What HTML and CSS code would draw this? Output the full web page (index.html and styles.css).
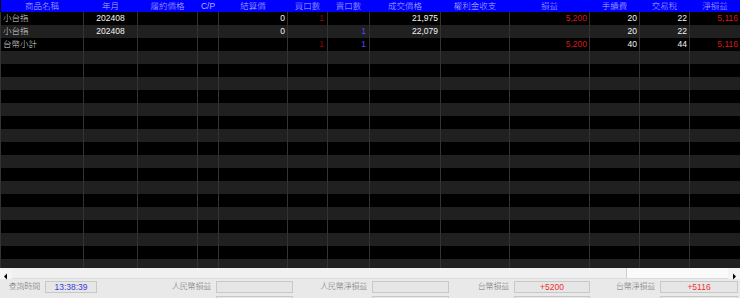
FILE: index.html
```html
<!DOCTYPE html>
<html lang="zh-Hant">
<head>
<meta charset="utf-8">
<link rel="stylesheet" href="styles.css">
</head>
<body>
<div class="grid-wrap">
<table class="grid">
<colgroup>
<col style="width:83px"><col style="width:54px"><col style="width:60px"><col style="width:21px"><col style="width:69px"><col style="width:40px"><col style="width:42px"><col style="width:71px"><col style="width:69px"><col style="width:80px"><col style="width:50px"><col style="width:50px"><col style="width:51px">
</colgroup>
<thead>
<tr><th>商品名稱</th><th>年月</th><th>履約價格</th><th>C/P</th><th>結算價</th><th>買口數</th><th>賣口數</th><th>成交價格</th><th>權利金收支</th><th>損益</th><th>手續費</th><th>交易稅</th><th>淨損益</th></tr>
</thead>
<tbody>
<tr><td class="l">小台指</td><td class="c">202408</td><td></td><td></td><td class="r">0</td><td class="r buy">1</td><td class="r"></td><td class="r">21,975</td><td></td><td class="r red">5,200</td><td class="r">20</td><td class="r">22</td><td class="r red">5,116</td></tr>
<tr><td class="l">小台指</td><td class="c">202408</td><td></td><td></td><td class="r">0</td><td class="r"></td><td class="r sell">1</td><td class="r">22,079</td><td></td><td class="r"></td><td class="r">20</td><td class="r">22</td><td></td></tr>
<tr><td class="l">台幣小計</td><td></td><td></td><td></td><td></td><td class="r buy">1</td><td class="r sell">1</td><td></td><td></td><td class="r red">5,200</td><td class="r">40</td><td class="r">44</td><td class="r red">5,116</td></tr>
<tr><td></td><td></td><td></td><td></td><td></td><td></td><td></td><td></td><td></td><td></td><td></td><td></td><td></td></tr>
<tr><td></td><td></td><td></td><td></td><td></td><td></td><td></td><td></td><td></td><td></td><td></td><td></td><td></td></tr>
<tr><td></td><td></td><td></td><td></td><td></td><td></td><td></td><td></td><td></td><td></td><td></td><td></td><td></td></tr>
<tr><td></td><td></td><td></td><td></td><td></td><td></td><td></td><td></td><td></td><td></td><td></td><td></td><td></td></tr>
<tr><td></td><td></td><td></td><td></td><td></td><td></td><td></td><td></td><td></td><td></td><td></td><td></td><td></td></tr>
<tr><td></td><td></td><td></td><td></td><td></td><td></td><td></td><td></td><td></td><td></td><td></td><td></td><td></td></tr>
<tr><td></td><td></td><td></td><td></td><td></td><td></td><td></td><td></td><td></td><td></td><td></td><td></td><td></td></tr>
<tr><td></td><td></td><td></td><td></td><td></td><td></td><td></td><td></td><td></td><td></td><td></td><td></td><td></td></tr>
<tr><td></td><td></td><td></td><td></td><td></td><td></td><td></td><td></td><td></td><td></td><td></td><td></td><td></td></tr>
<tr><td></td><td></td><td></td><td></td><td></td><td></td><td></td><td></td><td></td><td></td><td></td><td></td><td></td></tr>
<tr><td></td><td></td><td></td><td></td><td></td><td></td><td></td><td></td><td></td><td></td><td></td><td></td><td></td></tr>
<tr><td></td><td></td><td></td><td></td><td></td><td></td><td></td><td></td><td></td><td></td><td></td><td></td><td></td></tr>
<tr><td></td><td></td><td></td><td></td><td></td><td></td><td></td><td></td><td></td><td></td><td></td><td></td><td></td></tr>
<tr><td></td><td></td><td></td><td></td><td></td><td></td><td></td><td></td><td></td><td></td><td></td><td></td><td></td></tr>
<tr><td></td><td></td><td></td><td></td><td></td><td></td><td></td><td></td><td></td><td></td><td></td><td></td><td></td></tr>
<tr><td></td><td></td><td></td><td></td><td></td><td></td><td></td><td></td><td></td><td></td><td></td><td></td><td></td></tr>
<tr><td></td><td></td><td></td><td></td><td></td><td></td><td></td><td></td><td></td><td></td><td></td><td></td><td></td></tr>
</tbody>
</table>
</div>
<div class="hscroll">
  <div class="sb-btn"><svg width="12" height="11" viewBox="0 0 12 11"><path d="M4 5.5 L7 2.5 L7 8.5 Z" fill="#000"/></svg></div>
  <div class="sb-thumb"></div>
  <div class="sb-track"></div>
  <div class="sb-btn"><svg width="12" height="11" viewBox="0 0 12 11"><path d="M8 5.5 L5 2.5 L5 8.5 Z" fill="#000"/></svg></div>
</div>
<div class="status">
  <div class="srow">
    <span class="lbl w1">查詢時間</span><span class="box b1 time">13:38:39</span>
    <span class="lbl w2">人民幣損益</span><span class="box b2"></span>
    <span class="lbl w3">人民幣淨損益</span><span class="box b3"></span>
    <span class="lbl w4">台幣損益</span><span class="box b4 pos">+5200</span>
    <span class="lbl w5">台幣淨損益</span><span class="box b5 pos">+5116</span>
  </div>
  <div class="srow">
    <span class="lbl w1"></span><span class="nobox b1"></span>
    <span class="lbl w2"></span><span class="box b2"></span>
    <span class="lbl w3"></span><span class="box b3"></span>
    <span class="lbl w4"></span><span class="box b4"></span>
    <span class="lbl w5"></span><span class="box b5"></span>
  </div>
</div>
</body>
</html>
```

FILE: styles.css
```css
html, body {
  margin: 0;
  padding: 0;
  background: #e9e9e9;
  width: 740px;
  height: 298px;
  overflow: hidden;
  font-family: "Liberation Sans", "Noto Sans CJK TC", sans-serif;
}

.grid-wrap {
  height: 268px;
  overflow: hidden;
  background: #000;
}

.grid {
  border-collapse: collapse;
  table-layout: fixed;
  width: 740px;
}

.grid th {
  background: #0000ff;
  color: #b4b4ff;
  font-weight: 300;
  font-size: 8.5px;
  height: 12px;
  line-height: 12px;
  padding: 0;
  text-align: center;
  white-space: nowrap;
  overflow: hidden;
}

.grid td {
  height: 13px;
  line-height: 13px;
  padding: 0 2px;
  font-size: 8.5px;
  color: #f2f2f2;
  white-space: nowrap;
  overflow: hidden;
  border-right: 1px solid #333;
}

.grid td:first-child {
  border-left: 1px solid #333;
}

.grid tbody tr:nth-child(odd) td { background: #000; }
.grid tbody tr:nth-child(even) td { background: #202020; }

.grid td.l { text-align: left; padding-left: 2px; color: #dcdcdc; font-weight: 300; }
.grid td.c { text-align: center; }
.grid td.r { text-align: right; }
.grid td.red { color: #d81818; }
.grid td.buy { color: #a00000; padding-right: 3px; }
.grid td.sell { color: #4a4aff; padding-right: 3px; }

.hscroll {
  display: flex;
  height: 11px;
  background: #f0f0f0;
}

.sb-btn {
  width: 12px;
  height: 11px;
  background: #f4f4f4;
  flex: none;
}

.sb-thumb {
  width: 614px;
  height: 10px;
  background: #f0f0f0;
  border-right: 1px solid #cfcfcf;
  border-bottom: 1px solid #dcdcdc;
  flex: none;
}

.sb-track {
  flex: 1;
  background: #fafafa;
  border-bottom: 1px solid #dcdcdc;
}

.status {
  display: flex;
  flex-direction: column;
  font-size: 8px;
  color: #707070;
}

.srow {
  display: flex;
  height: 15px;
  padding-top: 2px;
  box-sizing: border-box;
  align-items: flex-start;
}

.lbl {
  text-align: right;
  padding-right: 5px;
  box-sizing: border-box;
  white-space: nowrap;
  height: 12px;
  line-height: 12px;
  letter-spacing: -0.2px;
  font-weight: 300;
}
.w1 { width: 45px; }
.w2 { width: 119px; }
.w3 { width: 79px; }
.w4 { width: 65px; }
.w5 { width: 70px; }

.box, .nobox {
  height: 12px;
  line-height: 10px;
  box-sizing: border-box;
  text-align: center;
  font-size: 8.5px;
}
.box {
  border: 1px solid #c8c8c8;
  background: #e6e6e6;
}
.b1 { width: 52px; }
.b2 { width: 77px; }
.b3 { width: 77px; }
.b4 { width: 76px; }
.b5 { width: 78px; }

.time { color: #3a3ad8; }
.pos { color: #ee3030; }
```
